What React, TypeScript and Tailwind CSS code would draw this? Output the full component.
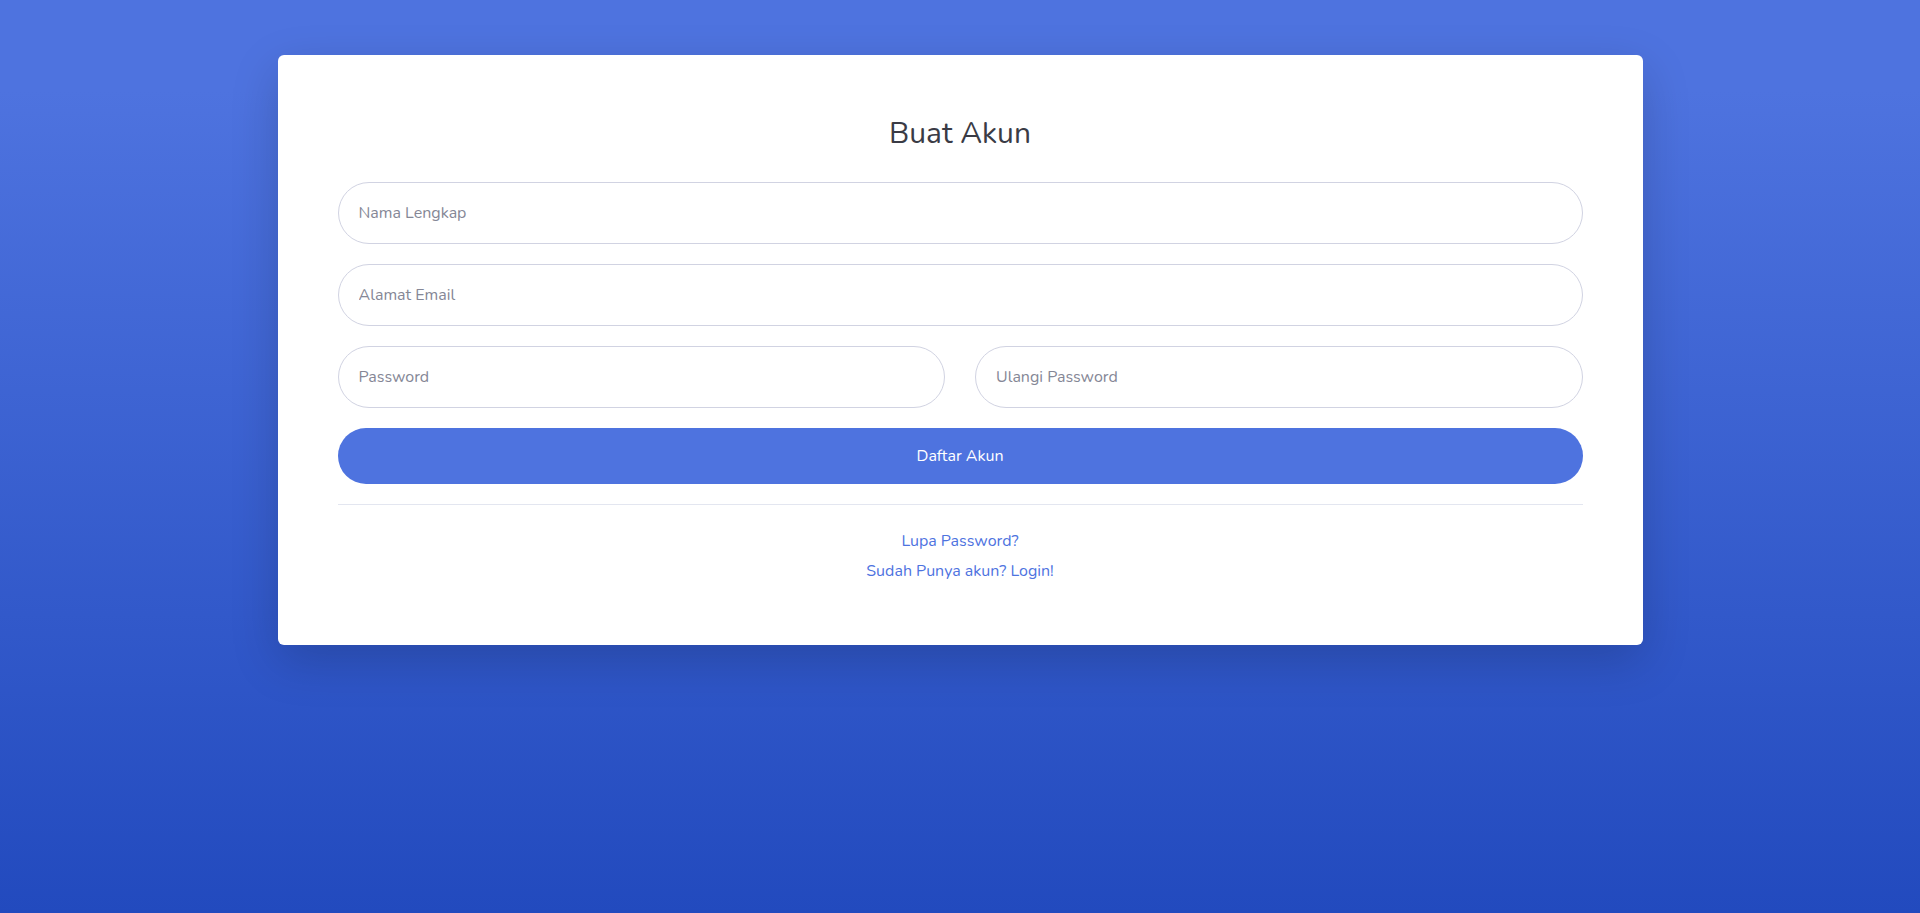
import React from "react";

const font = { fontFamily: "Nunito, Lato, 'Noto Sans', sans-serif" };

const Field = ({ placeholder, type = "text" }: { placeholder: string; type?: string }) => (
  <input
    type={type}
    placeholder={placeholder}
    className="h-[62px] w-full rounded-full border border-[#d1d3e2] bg-white pl-[20px] pr-4 text-[16px] text-[#6e707e] placeholder:text-[#858796] outline-none"
  />
);

export default function App() {
  return (
    <div
      className="min-h-[913px] w-full bg-[linear-gradient(180deg,#4e73df_10%,#224abe_100%)] pt-[55px]"
      style={font}
    >
      <div className="mx-auto w-[1365px] rounded-[6px] bg-white px-[60px] pt-[61px] pb-[62px] shadow-[0_1rem_3rem_rgba(0,0,0,0.175)]">
        <h1 className="mb-[30px] text-center text-[30px] leading-[36px] font-normal text-[#3a3b45]">
          Buat Akun
        </h1>
        <form className="flex flex-col gap-[20px]" onSubmit={(e) => e.preventDefault()}>
          <Field placeholder="Nama Lengkap" />
          <Field placeholder="Alamat Email" type="email" />
          <div className="grid grid-cols-2 gap-[30px]">
            <Field placeholder="Password" type="password" />
            <Field placeholder="Ulangi Password" type="password" />
          </div>
          <button
            type="submit"
            className="h-[56px] w-full rounded-full bg-[#4e73df] text-[16px] text-white"
          >
            Daftar Akun
          </button>
        </form>
        <hr className="mt-[20px] border-t border-[#e3e6f0]" />
        <div className="mt-[24px] flex flex-col items-center gap-[6px] text-[16px] leading-[24px] text-[#4e73df]">
          <a href="#">Lupa Password?</a>
          <a href="#">Sudah Punya akun? Login!</a>
        </div>
      </div>
    </div>
  );
}
